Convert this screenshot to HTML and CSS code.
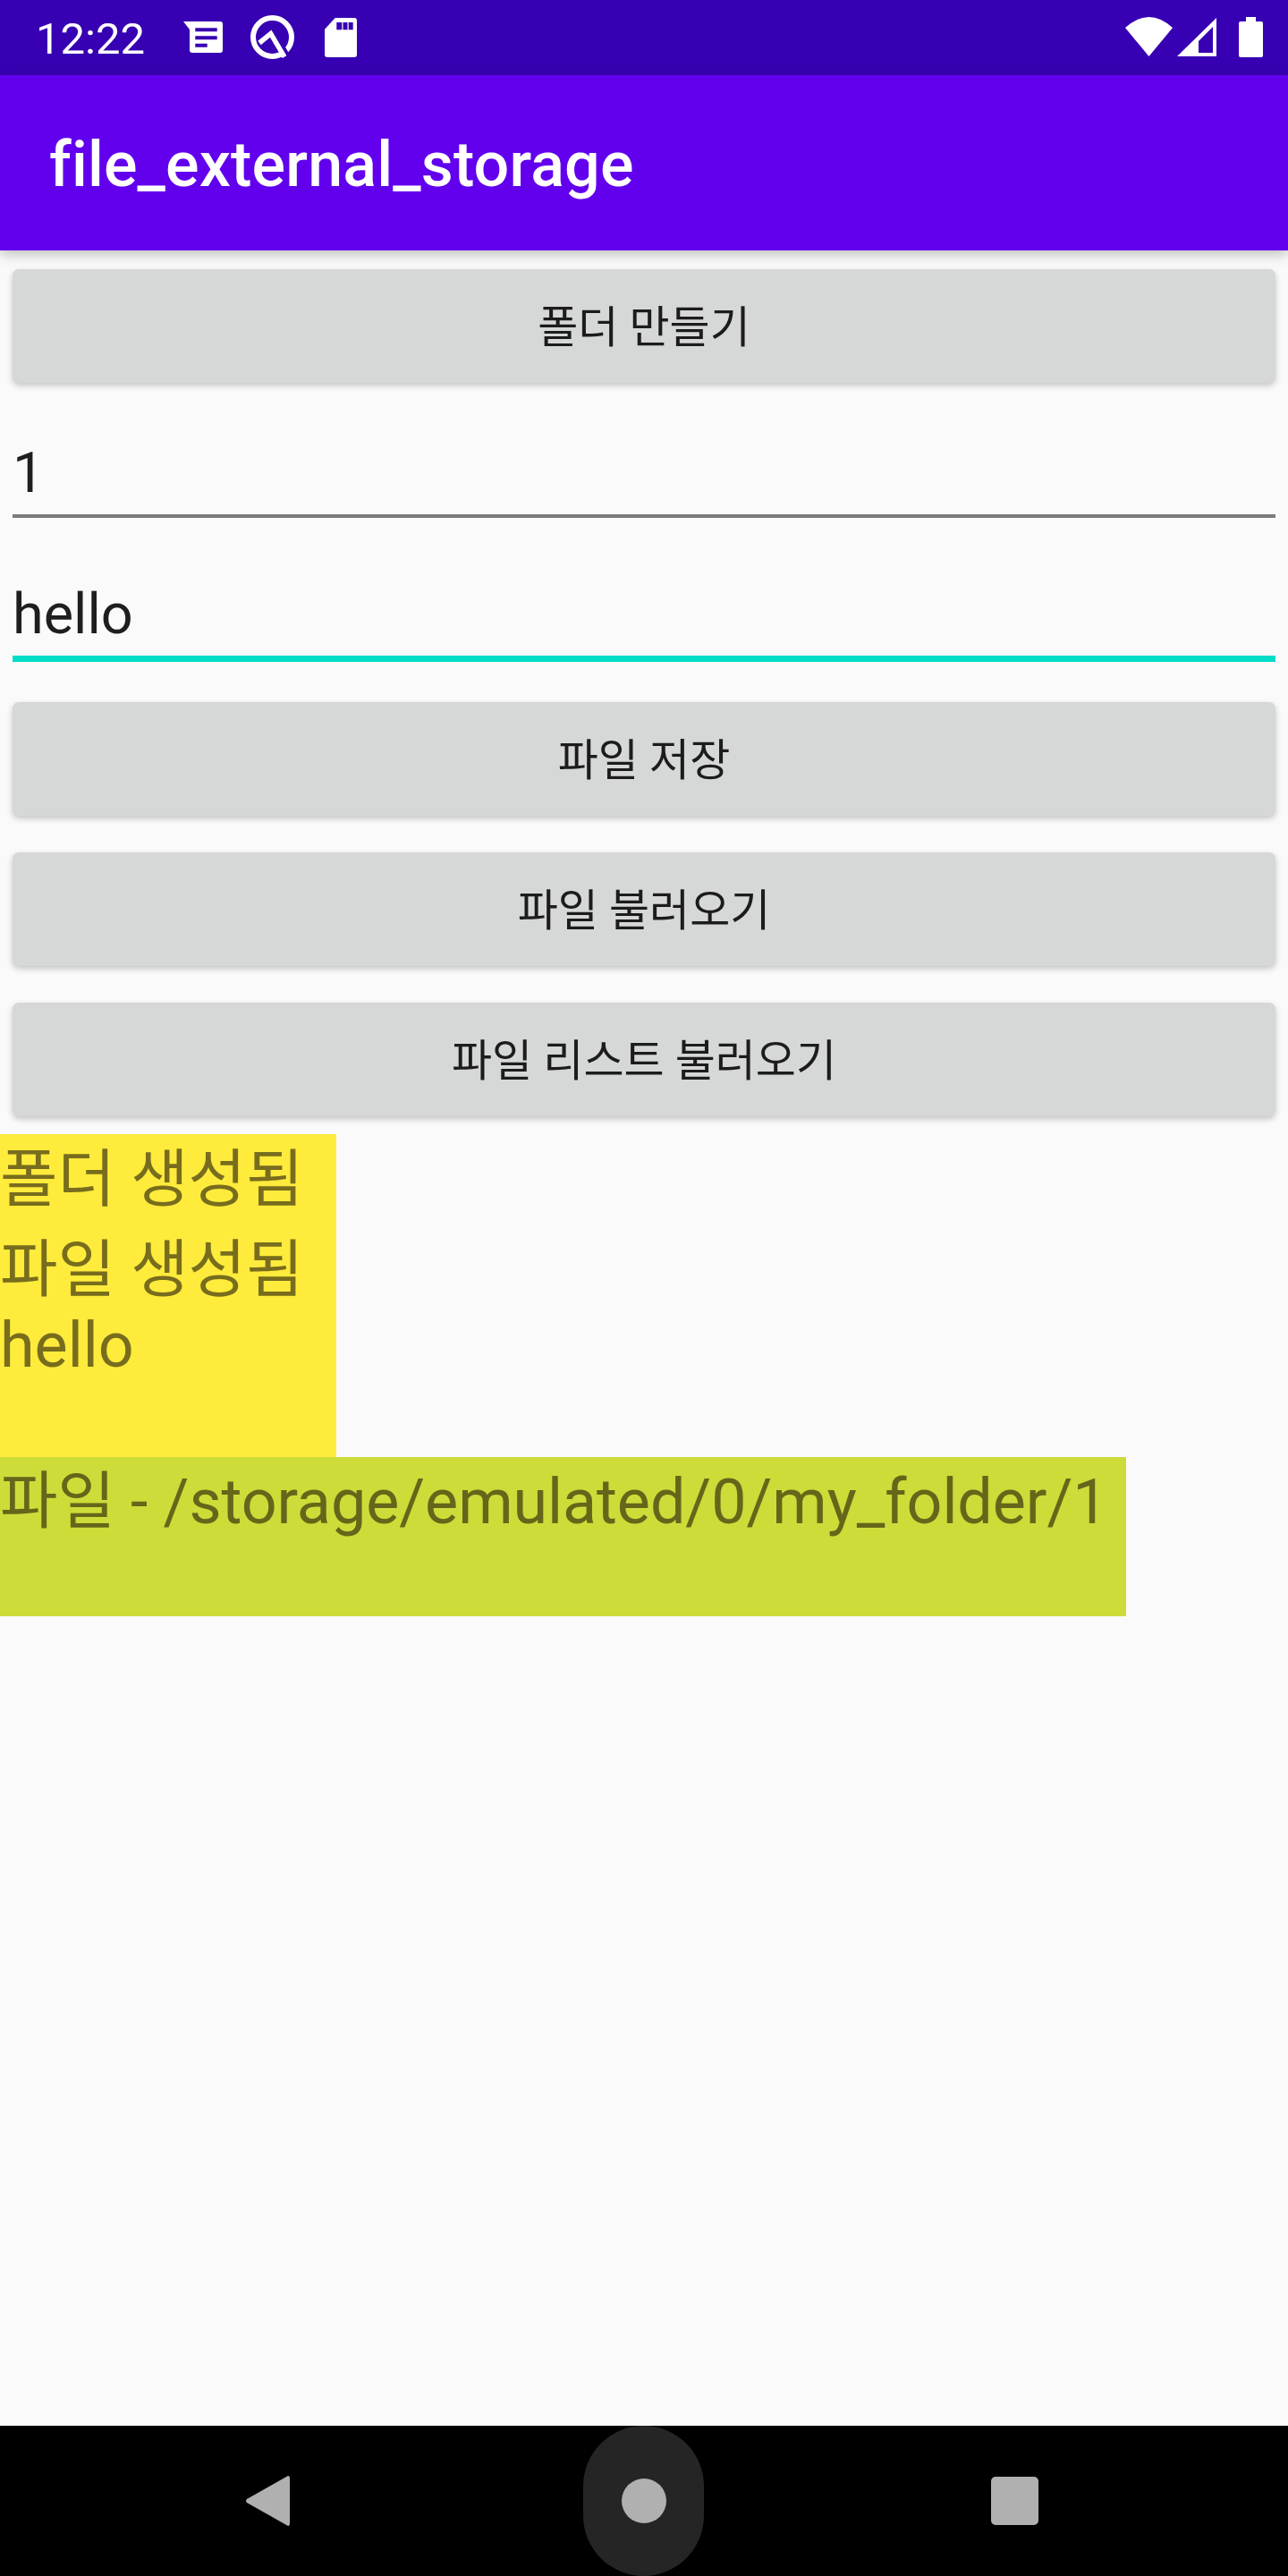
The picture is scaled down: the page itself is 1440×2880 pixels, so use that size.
FILE: index.html
```html
<!DOCTYPE html>
<html lang="ko">
<head>
    <meta charset="UTF-8">
    <meta name="viewport" content="width=device-width, initial-scale=1.0">
    <title>file_external_storage</title>
    <link rel="stylesheet" href="styles.css">
</head>
<body>

    <div class="phone">
        <div class="status-bar">
            <span class="clock">12:22</span>
            <svg class="icon-notes" viewBox="0 0 44 36"><path fill="#fff" d="M0 0H41Q44 0 44 3V32Q44 35 41 35H10Q7 35 7 32V9Z"/><path fill="#3700B3" d="M13.300 7.300H37.700V11.300H13.300ZM13.300 16.300H37.700V20.300H13.300ZM13.300 24.700H26.700V28.700H13.300Z"/></svg>
            <svg class="icon-q" viewBox="0 0 49 50"><circle cx="24.500" cy="24.500" r="21.500" fill="none" stroke="#fff" stroke-width="6"/><path fill="none" stroke="#3700B3" stroke-width="4" d="M34.300 31.500L45 50"/><path fill="none" stroke="#fff" stroke-width="5.500" d="M10 31L22.700 20.700L38 46.700"/></svg>
            <svg class="icon-sd" viewBox="0 0 36 44"><path fill="#fff" d="M11.700 0H33Q36 0 36 3V41Q36 44 33 44H3Q0 44 0 41V12.700Z"/><path fill="#3700B3" d="M13.300 5H19.300V13.300H13.300ZM20.500 5H25.500V13.300H20.500ZM26.700 5H31.700V13.300H26.700Z"/></svg>
            <span class="status-gap"></span>
            <svg class="icon-wifi" viewBox="0 0 53 44"><path fill="#fff" d="M0 12Q26.500-12 53 12L26.500 44Z"/></svg>
            <svg class="icon-signal" viewBox="0 0 44 43"><path fill="#fff" fill-rule="evenodd" d="M44 0V43H0ZM40 10L24 26V39H40Z"/></svg>
            <svg class="icon-battery" viewBox="0 0 27 45"><path fill="#fff" d="M8 0H19V5H25Q27 5 27 7V43Q27 45 25 45H2Q0 45 0 43V7Q0 5 2 5H8Z"/></svg>
        </div>

        <div class="app-bar">file_external_storage</div>

        <div class="content">
            <button class="btn btn-first">폴더 만들기</button>
            <div class="field field-name">1</div>
            <div class="field field-focus">hello</div>
            <button class="btn btn-save">파일 저장</button>
            <button class="btn">파일 불러오기</button>
            <button class="btn">파일 리스트 불러오기</button>

            <div class="log log-yellow">
                <div class="line-ko">폴더 생성됨</div>
                <div class="line-ko">파일 생성됨</div>
                <div class="line">hello</div>
            </div>
            <div class="log log-lime">
                <div class="line-ko">파일 - /storage/emulated/0/my_folder/1</div>
            </div>
        </div>

        <div class="nav-bar">
            <svg class="nav-back" viewBox="0 0 49 56"><path fill="#b0b0b0" d="M47 0Q49 0 49 3V53Q49 56 47 56L1 30Q-1 28 1 26Z"/></svg>
            <div class="nav-home"><div class="nav-dot"></div></div>
            <div class="nav-recent"></div>
        </div>
    </div>

</body>
</html>
```

FILE: styles.css
```css
body {
    margin: 0;
    background-color: #fafafa;
    font-family: Roboto, "Noto Sans CJK KR", sans-serif;
}
.phone {
    display: flex;
    flex-direction: column;
    width: 1440px;
    height: 2880px;
    overflow: hidden;
}

/* status bar */
.status-bar {
    display: flex;
    align-items: flex-start;
    height: 84px;
    background-color: #3700b3;
    color: white;
}
.clock {
    width: 165px;
    margin: 17px 0 0 40px;
    font-size: 49px;
    line-height: 53px;
}
.status-bar svg {
    flex: none;
}
.icon-notes {
    width: 44px;
    height: 36px;
    margin-top: 24px;
}
.icon-q {
    width: 49px;
    height: 50px;
    margin: 17px 0 0 31px;
}
.icon-sd {
    width: 36px;
    height: 44px;
    margin: 20px 0 0 34px;
}
.status-gap {
    flex: 1;
}
.icon-wifi {
    width: 53px;
    height: 44px;
    margin-top: 19px;
}
.icon-signal {
    width: 44px;
    height: 43px;
    margin: 20px 0 0 5px;
}
.icon-battery {
    width: 27px;
    height: 45px;
    margin: 19px 28px 0 25px;
}

/* app bar */
.app-bar {
    position: relative;
    height: 196px;
    padding-left: 55px;
    background-color: #6200ee;
    box-shadow: 0 4px 14px rgba(0, 0, 0, 0.25);
    color: white;
    font-size: 70px;
    font-weight: 500;
    letter-spacing: 0.17px;
    line-height: 200px;
}

/* buttons and fields */
.content {
    flex: 1;
}
.btn {
    display: block;
    width: 1412px;
    height: 127px;
    margin: 41px 14px 0;
    padding: 0 0 7px;
    border: none;
    border-radius: 7px;
    background-color: #d6d7d7;
    box-shadow: 0 3px 7px rgba(0, 0, 0, 0.22);
    color: #1c1c1c;
    font-family: inherit;
    font-size: 49px;
}
.btn-first {
    margin-top: 21px;
}
.btn-save {
    margin-top: 45px;
}
.field {
    height: 96px;
    margin: 0 14px;
    border-bottom: 4px solid #7b7b7b;
    color: #1e1e1e;
    font-size: 63px;
    line-height: 100px;
}
.field-name {
    margin-top: 51px;
}
.field-focus {
    margin-top: 58px;
    border-bottom: 7px solid #00dcc8;
}
.log {
    font-size: 70px;
}
.log-yellow {
    width: 376px;
    height: 360px;
    margin-top: 20px;
    padding-top: 1px;
    background-color: #ffeb3b;
    color: #786d1d;
}
.log-lime {
    width: 1259px;
    height: 178px;
    background-color: #cddc39;
    color: #66661a;
    letter-spacing: -0.05px;
}
.line-ko {
    height: 101px;
    line-height: 101px;
}
.line {
    height: 82px;
    line-height: 66px;
}

/* nav bar */
.nav-bar {
    position: relative;
    display: flex;
    align-items: center;
    height: 168px;
    background-color: black;
}
.nav-back {
    width: 49px;
    height: 56px;
    margin-left: 275px;
}
.nav-home {
    display: flex;
    align-items: center;
    justify-content: center;
    width: 135px;
    height: 168px;
    margin-left: 328px;
    border-radius: 68px;
    background-color: #252525;
}
.nav-dot {
    width: 50px;
    height: 50px;
    border-radius: 50%;
    background-color: #b0b0b0;
}
.nav-recent {
    width: 53px;
    height: 54px;
    margin-left: 321px;
    border-radius: 5px;
    background-color: #b0b0b0;
}
```
